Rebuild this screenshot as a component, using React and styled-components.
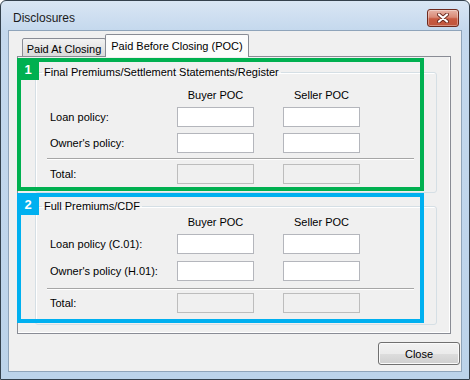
import styled, { createGlobalStyle } from "styled-components";

const GlobalStyle = createGlobalStyle`
  html, body {
    margin: 0;
    padding: 0;
  }
  body {
    width: 470px;
    height: 380px;
    overflow: hidden;
    font-family: "Liberation Sans", Arial, sans-serif;
    font-size: 11px;
    color: #000;
  }
  * {
    box-sizing: border-box;
  }
`;

const Window = styled.div`
  width: 470px;
  height: 380px;
  display: flex;
  flex-direction: column;
  border: 1px solid #34414d;
  border-radius: 6px 6px 0 0;
  background: linear-gradient(#d9e6f4, #c4d8ed 30px, #bcd3ea);
`;

const TitleBar = styled.div`
  height: 29px;
  flex: none;
  display: flex;
  align-items: center;
  justify-content: space-between;
  padding: 5px 10px 0 12px;
`;

const Title = styled.span`
  font-size: 12px;
  color: #1a1a1a;
`;

const CloseX = styled.div`
  width: 32px;
  height: 18px;
  display: flex;
  align-items: center;
  justify-content: center;
  border: 1px solid #6e2a1e;
  border-radius: 3px;
  background: linear-gradient(#e8b4a7, #d98a77 45%, #c85a41 55%, #c0553c);
  box-shadow: inset 0 0 0 1px rgba(255, 255, 255, 0.35);
`;

const Client = styled.div`
  flex: 1;
  display: flex;
  flex-direction: column;
  margin: 0 7px 7px;
  padding: 3px 1px 0 8px;
  background: #f0f0f0;
  border: 1px solid #8fa4ba;
`;

const TabStrip = styled.div`
  height: 23px;
  display: flex;
  align-items: flex-end;
  padding-left: 5px;
  margin-bottom: -1px;
  position: relative;
  z-index: 1;
`;

const Tab = styled.div`
  width: ${(p) => (p.$active ? 144 : 84)}px;
  height: ${(p) => (p.$active ? 23 : 19)}px;
  margin-left: ${(p) => (p.$active ? -1 : 0)}px;
  padding-top: ${(p) => (p.$active ? 5 : 4)}px;
  line-height: 13px;
  text-align: center;
  border: 1px solid #898c95;
  border-bottom: ${(p) => (p.$active ? "none" : "1px solid #898c95")};
  border-radius: 2px 2px 0 0;
  background: ${(p) =>
    p.$active ? "#fcfcfc" : "linear-gradient(#f3f3f3, #e6e6e6 50%, #dadada)"};
  position: relative;
  z-index: ${(p) => (p.$active ? 2 : 1)};
`;

const Panel = styled.div`
  height: 278px;
  margin-right: 9px;
  border: 1px solid #898c95;
  background: #f0f0f0;
  box-shadow: inset -1px -1px 0 #fff;
`;

const Section = styled.div`
  position: relative;
  width: 402px;
  margin: ${(p) => p.$top}px 0 0 17px;
`;

const Group = styled.fieldset`
  margin: 0;
  padding: 0;
  min-width: 0;
  border: 1px solid #d5dfe5;
  border-radius: 3px;
  box-shadow: inset 1px 1px 0 #fff;
`;

const Legend = styled.legend`
  margin-left: 6px;
  padding: 0 2px;
  line-height: 13px;
  font-size: 11px;
`;

const Body = styled.div`
  padding: 0 22px ${(p) => p.$bottom}px 11px;
`;

const Row = styled.div`
  display: flex;
  align-items: center;
  height: ${(p) => (p.$head ? 14 : 20)}px;
  margin-top: ${(p) => p.$mt}px;
`;

const Label = styled.div`
  width: 130px;
  flex: none;
  padding-left: 3px;
  white-space: nowrap;
`;

const ColHead = styled.div`
  width: 77px;
  line-height: 14px;
  text-align: center;
  white-space: nowrap;
  & + & {
    margin-left: 29px;
  }
`;

const Field = styled.input`
  width: 77px;
  height: 20px;
  padding: 0 2px;
  margin: 0;
  border: 1px solid #b4b6bc;
  background: #fff;
  font: inherit;
  & + & {
    margin-left: 29px;
  }
  &:disabled {
    background: #f0f0f0;
    border-color: #bdbdbd;
  }
`;

const Separator = styled.div`
  height: 2px;
  margin-top: ${(p) => p.$mt}px;
  border-top: 1px solid #a6a6a6;
  border-bottom: 1px solid #fff;
`;

const Callout = styled.div`
  position: absolute;
  left: -18px;
  top: ${(p) => p.$top}px;
  width: 407px;
  height: ${(p) => p.$h}px;
  border: 4px solid ${(p) => p.$color};
  pointer-events: none;
`;

const Badge = styled.div`
  position: absolute;
  left: -4px;
  top: -4px;
  width: 22px;
  height: 22px;
  display: flex;
  align-items: center;
  justify-content: center;
  background: ${(p) => p.$color};
  color: #fff;
  font-weight: bold;
  font-size: 13px;
`;

const Button = styled.button`
  align-self: flex-end;
  width: 82px;
  height: 23px;
  margin-top: 8px;
  border: 1px solid #707070;
  border-radius: 3px;
  background: linear-gradient(#f2f2f2, #ebebeb 50%, #dddddd 51%, #cfcfcf);
  box-shadow: inset 0 0 0 1px #fafafa;
  font-family: "Liberation Sans", Arial, sans-serif;
  font-size: 11px;
  color: #000;
  padding: 0;
`;

const sections = [
  {
    n: 1,
    color: "#00b050",
    title: "Final Premiums/Settlement Statements/Register",
    rows: ["Loan policy:", "Owner's policy:"],
    top: 9,
    sp: [9, 5, 6, 5, 4],
    bottom: 8,
    callout: { top: -8, h: 133 },
  },
  {
    n: 2,
    color: "#00b0f0",
    title: "Full Premiums/CDF",
    rows: ["Loan policy (C.01):", "Owner's policy (H.01):"],
    top: 7,
    sp: [2, 5, 7, 7, 3],
    bottom: 11,
    callout: { top: -7, h: 130 },
  },
];

const XGlyph = () => (
  <svg width="12" height="10" viewBox="0 0 12 10">
    <path d="M2 1.5 L10 8.5 M10 1.5 L2 8.5" stroke="#6b2a20" strokeWidth="4" strokeLinecap="round" />
    <path d="M2 1.5 L10 8.5 M10 1.5 L2 8.5" stroke="#fff" strokeWidth="2.2" strokeLinecap="round" />
  </svg>
);

const PocSection = ({ s }) => (
  <Section $top={s.top}>
    <Group>
      <Legend>{s.title}</Legend>
      <Body $bottom={s.bottom}>
        <Row $head $mt={s.sp[0]}>
          <Label />
          <ColHead>Buyer POC</ColHead>
          <ColHead>Seller POC</ColHead>
        </Row>
        <Row $mt={s.sp[1]}>
          <Label>{s.rows[0]}</Label>
          <Field type="text" />
          <Field type="text" />
        </Row>
        <Row $mt={s.sp[2]}>
          <Label>{s.rows[1]}</Label>
          <Field type="text" />
          <Field type="text" />
        </Row>
        <Separator $mt={s.sp[3]} />
        <Row $mt={s.sp[4]}>
          <Label>Total:</Label>
          <Field type="text" disabled />
          <Field type="text" disabled />
        </Row>
      </Body>
    </Group>
    <Callout $color={s.color} $top={s.callout.top} $h={s.callout.h}>
      <Badge $color={s.color}>{s.n}</Badge>
    </Callout>
  </Section>
);

export default function App() {
  return (
    <>
      <GlobalStyle />
      <Window>
        <TitleBar>
          <Title>Disclosures</Title>
          <CloseX>
            <XGlyph />
          </CloseX>
        </TitleBar>
        <Client>
          <TabStrip>
            <Tab>Paid At Closing</Tab>
            <Tab $active>Paid Before Closing (POC)</Tab>
          </TabStrip>
          <Panel>
            {sections.map((s) => (
              <PocSection key={s.n} s={s} />
            ))}
          </Panel>
          <Button>Close</Button>
        </Client>
      </Window>
    </>
  );
}
